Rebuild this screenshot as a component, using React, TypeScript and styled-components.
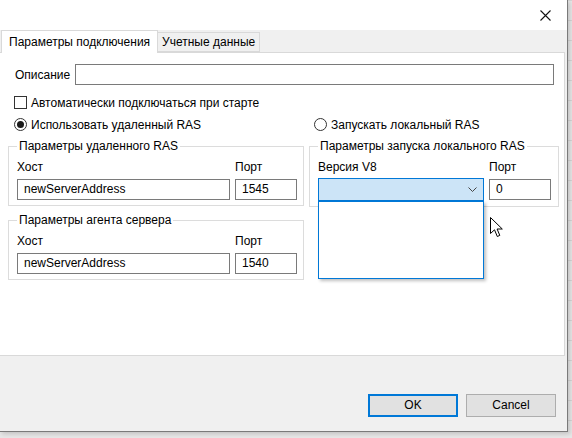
import React from "react";
import styled, { createGlobalStyle } from "styled-components";

const GlobalStyle = createGlobalStyle`
  html, body {
    margin: 0;
    padding: 0;
    background-color: #e6e6e6;
    background-image:
      linear-gradient(to bottom, #d4d4d4 1px, transparent 1px);
    background-size: 100% 20px;
    font-family: "Segoe UI", "Liberation Sans", Arial, sans-serif;
    font-size: 12px;
    color: #000;
  }
  #root {
    width: 572px;
    height: 438px;
    overflow: hidden;
  }
`;

const App = () => {
  return (
    <>
      <GlobalStyle />
      <Window>
        <TitleBar>
          <CloseButton>
            <svg width="11" height="11" viewBox="0 0 11 11">
              <path d="M0.5 0.5 L10.5 10.5 M10.5 0.5 L0.5 10.5" stroke="#111" strokeWidth="1.1" />
            </svg>
          </CloseButton>
        </TitleBar>
        <Body>
          <TabStrip>
            <Tab active>Параметры подключения</Tab>
            <Tab>Учетные данные</Tab>
          </TabStrip>
          <TabPage>
            <DescRow>
              <Label>Описание</Label>
              <TextInput width={479} />
            </DescRow>
            <CheckRow>
              <CheckBox />
              <span>Автоматически подключаться при старте</span>
            </CheckRow>
            <RadioRow>
              <RadioItem>
                <Radio checked />
                <span>Использовать удаленный RAS</span>
              </RadioItem>
              <RadioItem>
                <Radio />
                <span>Запускать локальный RAS</span>
              </RadioItem>
            </RadioRow>
            <Columns>
              <LeftColumn>
                <Group>
                  <GroupTitle>Параметры удаленного RAS</GroupTitle>
                  <FieldGrid left={213}>
                    <FieldLabel>Хост</FieldLabel>
                    <FieldLabel>Порт</FieldLabel>
                    <TextInput>newServerAddress</TextInput>
                    <TextInput>1545</TextInput>
                  </FieldGrid>
                </Group>
                <Group>
                  <GroupTitle>Параметры агента сервера</GroupTitle>
                  <FieldGrid left={213}>
                    <FieldLabel>Хост</FieldLabel>
                    <FieldLabel>Порт</FieldLabel>
                    <TextInput>newServerAddress</TextInput>
                    <TextInput>1540</TextInput>
                  </FieldGrid>
                </Group>
              </LeftColumn>
              <RightColumn>
                <Group>
                  <GroupTitle>Параметры запуска локального RAS</GroupTitle>
                  <FieldGrid left={166}>
                    <FieldLabel>Версия V8</FieldLabel>
                    <FieldLabel>Порт</FieldLabel>
                    <ComboWrap>
                      <Combo>
                        <svg width="9" height="5" viewBox="0 0 9 5">
                          <path d="M0.5 0.5 L4.5 4.5 L8.5 0.5" stroke="#444" strokeWidth="1" fill="none" />
                        </svg>
                      </Combo>
                      <DropList />
                    </ComboWrap>
                    <TextInput>0</TextInput>
                  </FieldGrid>
                </Group>
                <Cursor>
                  <svg width="13" height="21" viewBox="0 0 13 21">
                    <path
                      d="M0.5 0.5 L0.5 16.5 L4.5 12.8 L7.3 19.5 L9.8 18.4 L7.1 12 L12.3 12 Z"
                      fill="#fff"
                      stroke="#000"
                      strokeWidth="1"
                      strokeLinejoin="round"
                    />
                  </svg>
                </Cursor>
              </RightColumn>
            </Columns>
          </TabPage>
          <ButtonBar>
            <Button primary>OK</Button>
            <Button>Cancel</Button>
          </ButtonBar>
        </Body>
      </Window>
    </>
  );
};

export default App;

const Window = styled.div`
  width: 567px;
  height: 431px;
  background: #f0f0f0;
  border-right: 1px solid #7a7a7a;
  border-bottom: 1px solid #7a7a7a;
  box-shadow: 2px 2px 4px rgba(0, 0, 0, 0.15);
  display: flex;
  flex-direction: column;
`;

const TitleBar = styled.div`
  height: 30px;
  background: #fff;
  display: flex;
  justify-content: flex-end;
  align-items: center;
`;

const CloseButton = styled.div`
  width: 46px;
  height: 30px;
  display: flex;
  align-items: center;
  justify-content: center;
  margin-right: -1px;
  padding-top: 0px;
`;

const Body = styled.div`
  flex: 1;
  display: flex;
  flex-direction: column;
  padding-right: 2px;
`;

const TabStrip = styled.div`
  height: 22px;
  display: flex;
  align-items: flex-end;
  padding-left: 1px;
  position: relative;
  z-index: 1;
`;

const Tab = styled.div<{ active?: boolean }>`
  box-sizing: border-box;
  height: ${p => (p.active ? "23px" : "20px")};
  margin-bottom: ${p => (p.active ? "-1px" : "0")};
  padding: ${p => (p.active ? "0 7px 0 7px" : "0 4px")};
  background: ${p => (p.active ? "#fff" : "#f0f0f0")};
  border: 1px solid #d9d9d9;
  border-bottom: ${p => (p.active ? "none" : "1px solid #d9d9d9")};
  border-left: ${p => (p.active ? "1px solid #d9d9d9" : "none")};
  display: flex;
  align-items: center;
  white-space: nowrap;
  line-height: 15px;
`;

const TabPage = styled.div`
  box-sizing: border-box;
  height: 304px;
  background: #fff;
  border: 1px solid #d9d9d9;
  border-left: none;
  display: flex;
  flex-direction: column;
`;

const DescRow = styled.div`
  display: flex;
  align-items: center;
  margin-top: 11px;
  padding-left: 15px;
`;

const Label = styled.span`
  width: 60px;
  white-space: nowrap;
`;

const TextInput = styled.div<{ width?: number }>`
  box-sizing: border-box;
  width: ${p => (p.width ? `${p.width}px` : "auto")};
  height: 21px;
  border: 1px solid #7a7a7a;
  background: #fff;
  padding: 0 6px;
  display: flex;
  align-items: center;
  white-space: nowrap;
  line-height: 15px;
`;

const CheckRow = styled.div`
  display: flex;
  align-items: center;
  gap: 4px;
  margin-top: 10px;
  padding-left: 14px;
  height: 15px;
`;

const CheckBox = styled.span`
  box-sizing: border-box;
  width: 13px;
  height: 13px;
  border: 1px solid #333;
  background: #fff;
`;

const RadioRow = styled.div`
  display: grid;
  grid-template-columns: 300px 1fr;
  margin-top: 7px;
  padding-left: 14px;
  height: 15px;
`;

const RadioItem = styled.div`
  display: flex;
  align-items: center;
  gap: 4px;
  white-space: nowrap;
`;

const Radio = styled.span<{ checked?: boolean }>`
  box-sizing: border-box;
  width: 13px;
  height: 13px;
  border-radius: 50%;
  border: 1px solid #333;
  background: #fff;
  display: flex;
  align-items: center;
  justify-content: center;
  &::after {
    content: "";
    display: ${p => (p.checked ? "block" : "none")};
    width: 7px;
    height: 7px;
    border-radius: 50%;
    background: #1a1a1a;
  }
`;

const Columns = styled.div`
  display: grid;
  grid-template-columns: 296px 250px;
  column-gap: 5px;
  margin-top: 14px;
  padding-left: 8px;
  align-items: start;
`;

const LeftColumn = styled.div`
  display: flex;
  flex-direction: column;
  gap: 14px;
`;

const RightColumn = styled.div`
  position: relative;
  display: flex;
  flex-direction: column;
`;

const Group = styled.div`
  position: relative;
  box-sizing: border-box;
  border: 1px solid #dcdcdc;
  padding: 13px 7px 5px 8px;
`;

const GroupTitle = styled.span`
  position: absolute;
  top: -8px;
  left: 8px;
  padding: 0 2px;
  background: #fff;
  line-height: 15px;
  white-space: nowrap;
`;

const FieldGrid = styled.div<{ left: number }>`
  display: grid;
  grid-template-columns: ${p => p.left}px 62px;
  column-gap: 5px;
  row-gap: 4px;
`;

const FieldLabel = styled.span`
  line-height: 15px;
  white-space: nowrap;
`;

const ComboWrap = styled.div`
  position: relative;
`;

const Combo = styled.div`
  box-sizing: border-box;
  height: 23px;
  margin-top: -1px;
  background: #cce4f7;
  border: 1px solid #0078d7;
  display: flex;
  align-items: center;
  justify-content: flex-end;
  padding-right: 6px;
`;

const DropList = styled.div`
  position: absolute;
  top: 22px;
  left: 0;
  width: 100%;
  height: 78px;
  box-sizing: border-box;
  background: #fff;
  border: 1px solid #0078d7;
  box-shadow: 2px 2px 3px rgba(0, 0, 0, 0.25);
  z-index: 2;
`;

const Cursor = styled.div`
  position: absolute;
  top: 71px;
  left: 181px;
  z-index: 3;
  line-height: 0;
`;

const ButtonBar = styled.div`
  flex: 1;
  display: flex;
  justify-content: flex-end;
  align-items: flex-start;
  gap: 8px;
  padding-top: 38px;
  padding-right: 9px;
`;

const Button = styled.div<{ primary?: boolean }>`
  box-sizing: border-box;
  width: 90px;
  height: 23px;
  background: #e1e1e1;
  border: ${p => (p.primary ? "2px solid #0078d7" : "1px solid #adadad")};
  display: flex;
  align-items: center;
  justify-content: center;
  line-height: 15px;
`;
